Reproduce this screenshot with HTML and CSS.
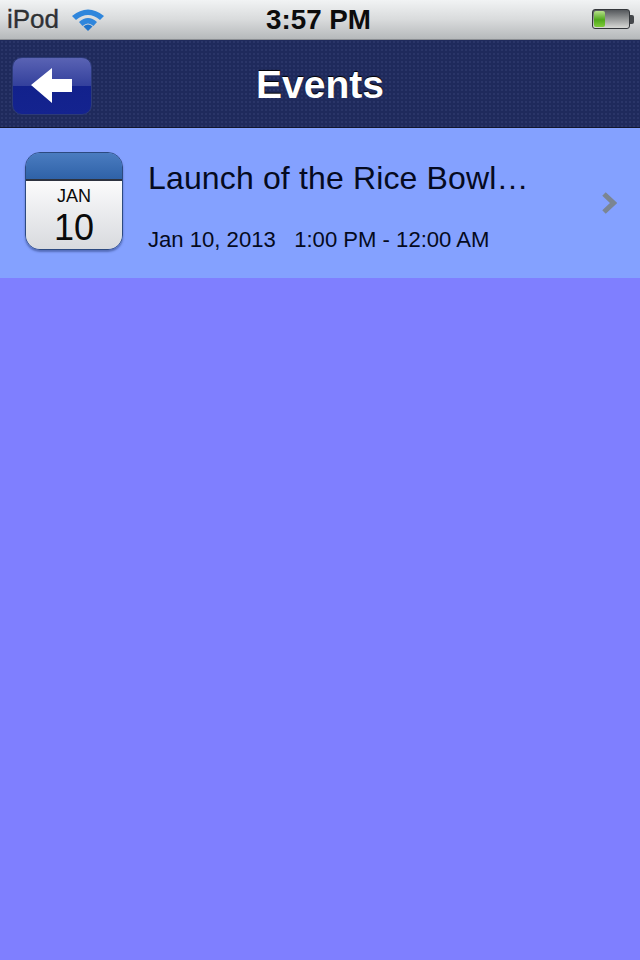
FILE: index.html
```html
<!DOCTYPE html>
<html lang="en">
<head>
    <meta charset="UTF-8">
    <meta name="viewport" content="width=device-width, initial-scale=1.0">
    <title>Events</title>
    <link rel="stylesheet" href="styles.css">
</head>
<body>
    <div class="status-bar">
        <div class="status-left">
            <span class="carrier">iPod</span>
            <svg class="wifi" width="34" height="24" viewBox="0 0 34 24">
                <path d="M1 9 Q17 -4 33 9 L29 13 Q17 3 5 13 Z" fill="#2f86dc"/>
                <path d="M8 15 Q17 7 26 15 L22.5 19 Q17 14 11.5 19 Z" fill="#2f86dc"/>
                <path d="M17 24 L12.5 19.5 Q17 15.5 21.5 19.5 Z" fill="#1f74cc"/>
            </svg>
        </div>
        <div class="clock">3:57 PM</div>
        <div class="battery">
            <div class="battery-body"><div class="battery-level"></div></div>
            <div class="battery-tip"></div>
        </div>
    </div>

    <div class="nav-bar">
        <button class="back-btn">
            <svg width="42" height="36" viewBox="0 0 42 36">
                <path d="M0 17 L21 0 L21 11 L41 11 L41 24 L21 24 L21 35 Z" fill="#fff"/>
            </svg>
        </button>
        <h1 class="nav-title">Events</h1>
    </div>

    <div class="event-row">
        <div class="cal-icon">
            <div class="cal-top"></div>
            <div class="cal-body">
                <span class="cal-month">JAN</span>
                <span class="cal-day">10</span>
            </div>
        </div>
        <div class="event-info">
            <div class="event-title">Launch of the Rice Bowl…</div>
            <div class="event-time">Jan 10, 2013&nbsp;&nbsp; 1:00 PM - 12:00 AM</div>
        </div>
        <svg class="chevron" width="16" height="24" viewBox="0 0 16 24">
            <path d="M3 3 L12.5 12 L3 21" fill="none" stroke="#7b8592" stroke-width="5"/>
        </svg>
    </div>
</body>
</html>
```

FILE: styles.css
```css
body {
    font-family: "Liberation Sans", Arial, sans-serif;
    background: #7f7fff;
    margin: 0;
    height: 960px;
    overflow: hidden;
}
.status-bar {
    height: 39px;
    background: linear-gradient(to bottom, #f1f3f4, #d9dbdc 50%, #b6b9bb);
    border-bottom: 1px solid #8a8d92;
    display: flex;
    align-items: center;
    justify-content: space-between;
    padding: 0 6px 0 7px;
    position: relative;
}
.status-left {
    display: flex;
    align-items: center;
    gap: 12px;
}
.carrier {
    font-size: 26px;
    color: #2e3134;
    text-shadow: 0 1px 0 rgba(255, 255, 255, 0.6);
    -webkit-text-stroke: 0.4px #2e3134;
}
.wifi {
    margin-bottom: 2px;
}
.clock {
    font-size: 27.8px;
    font-weight: bold;
    color: #0c0c0c;
    position: absolute;
    left: 0;
    right: 3px;
    text-align: center;
}
.battery {
    display: flex;
    align-items: center;
    margin-bottom: 1px;
}
.battery-body {
    width: 38px;
    height: 20px;
    border: 1px solid #33363a;
    border-radius: 3px;
    background: linear-gradient(to bottom, #55585c, #d8d9d6);
    padding: 1px;
    box-sizing: border-box;
}
.battery-level {
    width: 11px;
    height: 100%;
    border-radius: 2px;
    background: linear-gradient(to bottom, #b7e08a, #4fa81a 55%, #7fcc3a);
}
.battery-tip {
    width: 4px;
    height: 9px;
    background: #44474b;
    border-radius: 0 2px 2px 0;
}
.nav-bar {
    height: 87px;
    background-color: #1f2a5c;
    background-image: radial-gradient(#2a3568 1px, transparent 1.2px);
    background-size: 4px 4px;
    border-bottom: 1px solid #11162e;
    display: flex;
    align-items: center;
    position: relative;
    padding-left: 12px;
}
.back-btn {
    width: 80px;
    height: 58px;
    margin-top: 4px;
    padding: 0;
    border: 1px solid #2c3a78;
    border-radius: 10px;
    background: linear-gradient(to bottom, #5a63b4, #33409c 50%, #12218c 50%, #14238f);
    display: flex;
    align-items: center;
    justify-content: center;
}
.nav-title {
    position: absolute;
    left: 0;
    right: 0;
    margin: 2px 0 0;
    text-align: center;
    font-size: 39px;
    font-weight: bold;
    color: #fff;
    text-shadow: 0 -1px 1px #000;
}
.event-row {
    height: 150px;
    background: #84a1ff;
    display: flex;
    align-items: center;
    padding: 0 23px 0 25px;
}
.cal-icon {
    width: 98px;
    height: 98px;
    border-radius: 15px;
    overflow: hidden;
    box-sizing: border-box;
    border: 1px solid #2c4a80;
    box-shadow: 0 2px 2px rgba(40, 60, 120, 0.5);
    margin-top: -4px;
    flex-shrink: 0;
}
.cal-top {
    height: 26px;
    background: linear-gradient(to bottom, #4a7cc0, #2f62a8);
    border-bottom: 2px solid #2e3340;
}
.cal-body {
    height: 68px;
    background: linear-gradient(to bottom, #fbfbfc, #d8dade);
    display: flex;
    flex-direction: column;
    align-items: center;
    color: #0a0a0a;
}
.cal-month {
    font-size: 18px;
    line-height: 18px;
    margin-top: 6px;
}
.cal-day {
    font-size: 36px;
    line-height: 38px;
    margin-top: 4px;
}
.event-info {
    flex: 1;
    margin: 6px 0 0 25px;
    color: #050a20;
}
.event-title {
    font-size: 32px;
    letter-spacing: 0.15px;
    line-height: 36px;
    margin-bottom: 31px;
}
.event-time {
    font-size: 22.1px;
    line-height: 26px;
}
.chevron {
    flex-shrink: 0;
}
```
